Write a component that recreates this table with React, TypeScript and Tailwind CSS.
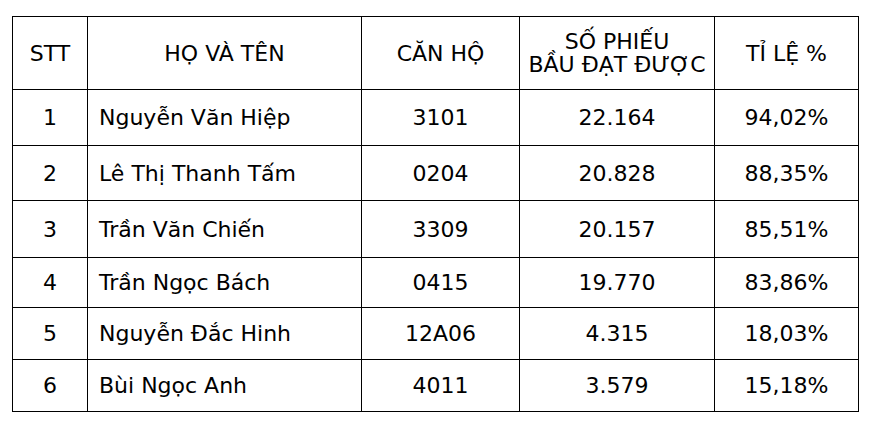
const rows = [
  { stt: 1, ten: 'Nguyễn Văn Hiệp', canHo: '3101', phieu: '22.164', tiLe: '94,02%', h: 'h-[56px]' },
  { stt: 2, ten: 'Lê Thị Thanh Tấm', canHo: '0204', phieu: '20.828', tiLe: '88,35%', h: 'h-[55px]' },
  { stt: 3, ten: 'Trần Văn Chiến', canHo: '3309', phieu: '20.157', tiLe: '85,51%', h: 'h-[57px]' },
  { stt: 4, ten: 'Trần Ngọc Bách', canHo: '0415', phieu: '19.770', tiLe: '83,86%', h: 'h-[50px]' },
  { stt: 5, ten: 'Nguyễn Đắc Hinh', canHo: '12A06', phieu: '4.315', tiLe: '18,03%', h: 'h-[52px]' },
  { stt: 6, ten: 'Bùi Ngọc Anh', canHo: '4011', phieu: '3.579', tiLe: '15,18%', h: 'h-[52px]' },
];

export default function App() {
  return (
    <div className="w-[871px] h-[424px] bg-white pt-[16px] pl-[12px] text-black font-['DejaVu_Sans',Verdana,sans-serif] text-[22px]">
      <table className="border-collapse table-fixed w-[846px]">
        <colgroup>
          <col className="w-[75px]" />
          <col className="w-[274px]" />
          <col className="w-[158px]" />
          <col className="w-[195px]" />
          <col className="w-[144px]" />
        </colgroup>
        <thead>
          <tr className="h-[73px]">
            <th className="border border-black font-normal text-center">STT</th>
            <th className="border border-black font-normal text-center">HỌ VÀ TÊN</th>
            <th className="border border-black font-normal text-center">CĂN HỘ</th>
            <th className="border border-black font-normal text-center leading-[23px]">
              SỐ PHIẾU
              <br />
              BẦU ĐẠT ĐƯỢC
            </th>
            <th className="border border-black font-normal text-center">TỈ LỆ %</th>
          </tr>
        </thead>
        <tbody>
          {rows.map((r) => (
            <tr key={r.stt} className={r.h}>
              <td className="border border-black text-center">{r.stt}</td>
              <td className="border border-black text-left pl-[11px]">{r.ten}</td>
              <td className="border border-black text-center">{r.canHo}</td>
              <td className="border border-black text-center">{r.phieu}</td>
              <td className="border border-black text-center">{r.tiLe}</td>
            </tr>
          ))}
        </tbody>
      </table>
    </div>
  );
}
